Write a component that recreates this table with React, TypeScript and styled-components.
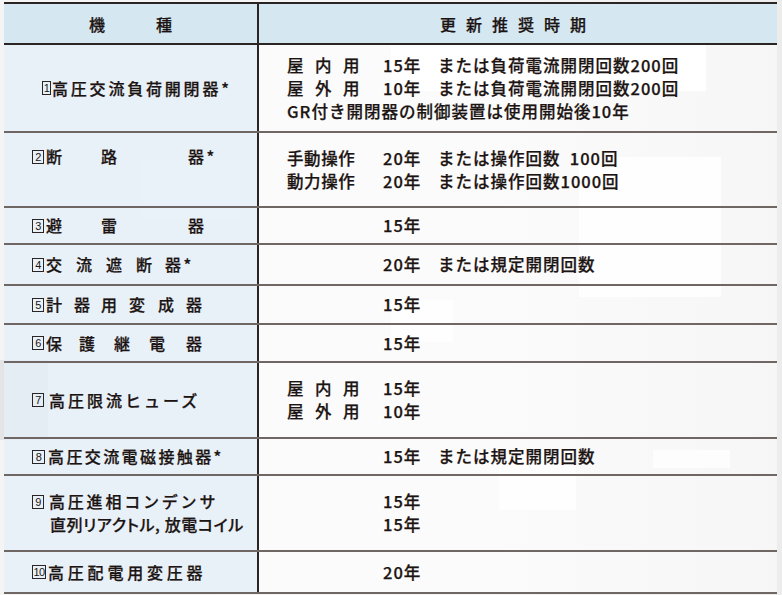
import styled, { createGlobalStyle } from "styled-components";

const GlobalStyle = createGlobalStyle`
  html, body {
    margin: 0;
    padding: 0;
  }
  body {
    width: 782px;
    height: 595px;
    overflow: hidden;
    font-family: "Noto Sans CJK JP", "Noto Sans", sans-serif;
    color: #1c1412;
    -webkit-text-stroke: 0.25px #1c1412;
    background:
      linear-gradient(#ffffff, #ffffff) 391px 43px / 315px 48px no-repeat,
      linear-gradient(#fdfdfd, #fdfdfd) 579px 157px / 142px 140px no-repeat,
      linear-gradient(#fcfcfc, #fcfcfc) 391px 300px / 62px 42px no-repeat,
      linear-gradient(#fdfdfd, #fdfdfd) 499px 450px / 77px 60px no-repeat,
      linear-gradient(#fbfbfb, #fbfbfb) 653px 450px / 77px 18px no-repeat,
      linear-gradient(#f7f7f8, #f7f7f8) 143px 160px / 97px 60px no-repeat,
      linear-gradient(#e4e4e6, #e4e4e6) 0 360px / 48px 80px no-repeat,
      linear-gradient(90deg, #f4f4f5 0%, #f6f6f7 60%, #ececed 100%);
  }
`;

const Table = styled.div`
  width: 773px;
  margin: 2px 0 0 4px;
  border-top: 2px solid #2b2424;
`;

const Row = styled.div<{ $h: number; $head?: boolean }>`
  display: grid;
  grid-template-columns: 255px 1fr;
  height: ${(p) => p.$h}px;
  box-sizing: border-box;
  border-bottom: 2px solid ${(p) => (p.$head ? "#2b2424" : "#6e6763")};
  background: ${(p) => (p.$head ? "#d5e8f2" : "transparent")};
`;

const HeadCell = styled.div<{ $ls: number; $divider?: boolean }>`
  display: flex;
  align-items: center;
  justify-content: center;
  font-size: 16px;
  font-weight: 500;
  letter-spacing: ${(p) => p.$ls}px;
  border-right: ${(p) => (p.$divider ? "2px solid #2b2424" : "none")};
`;

const Kind = styled.div<{ $top?: boolean }>`
  display: flex;
  flex-direction: column;
  justify-content: ${(p) => (p.$top ? "flex-start" : "center")};
  padding: ${(p) => (p.$top ? "12px" : "0")} 0 0 28px;
  border-right: 2px solid #2b2424;
  background: rgba(228, 240, 249, 0.7);
  font-size: 16px;
  font-weight: 500;
  line-height: 23px;
  white-space: nowrap;
`;

const KindLine = styled.div<{ $ls?: number; $indent?: number }>`
  display: flex;
  align-items: center;
  letter-spacing: ${(p) => p.$ls ?? 2.5}px;
  padding-left: ${(p) => p.$indent ?? 0}px;
`;

const SubLine = styled.div`
  padding-left: 18px;
  letter-spacing: 0.6px;
  font-feature-settings: "palt";
`;

const NumBox = styled.span<{ $w?: number; $gap?: number }>`
  display: inline-flex;
  flex: none;
  align-items: center;
  justify-content: center;
  box-sizing: border-box;
  width: ${(p) => p.$w ?? 12}px;
  height: 14px;
  margin-right: ${(p) => p.$gap ?? 2}px;
  border: 1px solid #2b2424;
  font-family: "Liberation Sans", "DejaVu Sans", sans-serif;
  font-size: 11px;
  line-height: 12px;
  letter-spacing: -0.5px;
  -webkit-text-stroke: 0;
`;

const Ch = styled.span<{ $w: number }>`
  display: inline-block;
  width: ${(p) => p.$w}px;
  letter-spacing: 0;
`;

const Period = styled.div`
  display: flex;
  flex-direction: column;
  justify-content: center;
  padding-left: 28px;
  background: rgba(255, 255, 255, 0.55);
  font-size: 16.5px;
  font-weight: 500;
  line-height: 23px;
  letter-spacing: 1px;
  white-space: nowrap;
`;

const Line = styled.div`
  display: grid;
  grid-template-columns: 96px 55px auto;
`;

const Label = styled.span<{ $ls?: number }>`
  letter-spacing: ${(p) => p.$ls ?? 0.6}px;
`;

const Count = styled.span<{ $w: number }>`
  display: inline-block;
  width: ${(p) => p.$w}px;
  text-align: right;
`;

export default function App() {
  return (
    <>
      <GlobalStyle />
      <Table>
        <Row $h={41} $head>
          <HeadCell $ls={0} $divider>
            <Ch $w={67}>機</Ch>種
          </HeadCell>
          <HeadCell $ls={10}>更新推奨時期</HeadCell>
        </Row>

        <Row $h={88}>
          <Kind>
            <KindLine $ls={2.8} $indent={10}>
              <NumBox $w={9} $gap={1}>1</NumBox>高圧交流負荷開閉器*
            </KindLine>
          </Kind>
          <Period>
            <Line>
              <Label $ls={11.5}>屋内用</Label>
              <span>15年</span>
              <span>または負荷電流開閉回数200回</span>
            </Line>
            <Line>
              <Label $ls={11.5}>屋外用</Label>
              <span>10年</span>
              <span>または負荷電流開閉回数200回</span>
            </Line>
            <div>GR付き開閉器の制御装置は使用開始後10年</div>
          </Period>
        </Row>

        <Row $h={75}>
          <Kind $top>
            <KindLine>
              <NumBox>2</NumBox>
              <Ch $w={55}>断</Ch>
              <Ch $w={87}>路</Ch>器*
            </KindLine>
          </Kind>
          <Period>
            <Line>
              <Label>手動操作</Label>
              <span>20年</span>
              <span>
                または操作回数<Count $w={58}>100回</Count>
              </span>
            </Line>
            <Line>
              <Label>動力操作</Label>
              <span>20年</span>
              <span>
                または操作回数<Count $w={58}>1000回</Count>
              </span>
            </Line>
          </Period>
        </Row>

        <Row $h={37}>
          <Kind>
            <KindLine>
              <NumBox>3</NumBox>
              <Ch $w={55}>避</Ch>
              <Ch $w={87}>雷</Ch>器
            </KindLine>
          </Kind>
          <Period>
            <Line>
              <span />
              <span>15年</span>
            </Line>
          </Period>
        </Row>

        <Row $h={41}>
          <Kind>
            <KindLine>
              <NumBox>4</NumBox>
              <Ch $w={30}>交</Ch>
              <Ch $w={30}>流</Ch>
              <Ch $w={30}>遮</Ch>
              <Ch $w={29}>断</Ch>器*
            </KindLine>
          </Kind>
          <Period>
            <Line>
              <span />
              <span>20年</span>
              <span>または規定開閉回数</span>
            </Line>
          </Period>
        </Row>

        <Row $h={39}>
          <Kind>
            <KindLine>
              <NumBox>5</NumBox>
              <Ch $w={28}>計</Ch>
              <Ch $w={27}>器</Ch>
              <Ch $w={28}>用</Ch>
              <Ch $w={29}>変</Ch>
              <Ch $w={28}>成</Ch>器
            </KindLine>
          </Kind>
          <Period>
            <Line>
              <span />
              <span>15年</span>
            </Line>
          </Period>
        </Row>

        <Row $h={38}>
          <Kind>
            <KindLine>
              <NumBox>6</NumBox>
              <Ch $w={33}>保</Ch>
              <Ch $w={35}>護</Ch>
              <Ch $w={35}>継</Ch>
              <Ch $w={37}>電</Ch>器
            </KindLine>
          </Kind>
          <Period>
            <Line>
              <span />
              <span>15年</span>
            </Line>
          </Period>
        </Row>

        <Row $h={76}>
          <Kind>
            <KindLine $ls={3}>
              <NumBox $gap={5}>7</NumBox>高圧限流ヒューズ
            </KindLine>
          </Kind>
          <Period>
            <Line>
              <Label $ls={11.5}>屋内用</Label>
              <span>15年</span>
            </Line>
            <Line>
              <Label $ls={11.5}>屋外用</Label>
              <span>10年</span>
            </Line>
          </Period>
        </Row>

        <Row $h={37}>
          <Kind>
            <KindLine $ls={2.4}>
              <NumBox $w={13} $gap={3}>8</NumBox>高圧交流電磁接触器*
            </KindLine>
          </Kind>
          <Period>
            <Line>
              <span />
              <span>15年</span>
              <span>または規定開閉回数</span>
            </Line>
          </Period>
        </Row>

        <Row $h={76}>
          <Kind>
            <KindLine $ls={2.8}>
              <NumBox $gap={5}>9</NumBox>高圧進相コンデンサ
            </KindLine>
            <SubLine>直列リアクトル, 放電コイル</SubLine>
          </Kind>
          <Period>
            <Line>
              <span />
              <span>15年</span>
            </Line>
            <Line>
              <span />
              <span>15年</span>
            </Line>
          </Period>
        </Row>

        <Row $h={42}>
          <Kind>
            <KindLine $ls={3.8}>
              <NumBox $w={14} $gap={2}>10</NumBox>高圧配電用変圧器
            </KindLine>
          </Kind>
          <Period>
            <Line>
              <span />
              <span>20年</span>
            </Line>
          </Period>
        </Row>
      </Table>
    </>
  );
}
